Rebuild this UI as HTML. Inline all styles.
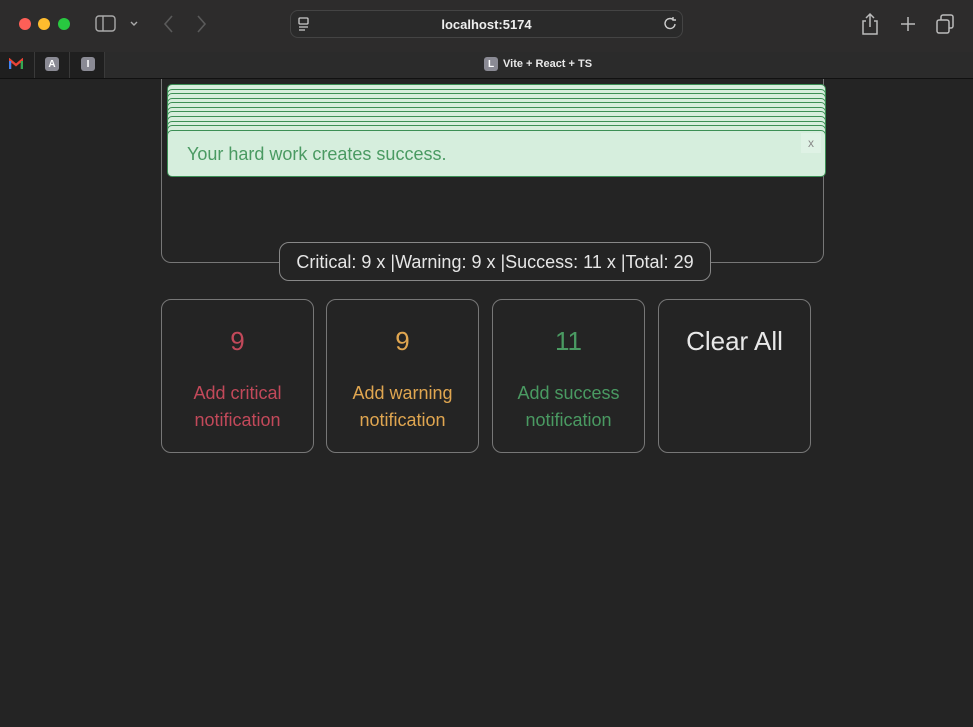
<!DOCTYPE html>
<html><head><meta charset="utf-8"><style>
*{box-sizing:border-box;margin:0;padding:0}
body{width:973px;height:727px;background:#242424;font-family:"Liberation Sans",sans-serif;position:relative;overflow:hidden}
.tb{position:absolute;left:0;top:0;width:973px;height:52px;background:#2d2c2c}
.tabs{position:absolute;left:0;top:52px;width:973px;height:27px;background:#2b2b2b;border-bottom:1px solid #111}
.pin{position:absolute;top:52px;height:26px;width:35px;background:#1f1f1f;border-right:1px solid #3a3a3a}
.dot{position:absolute;top:18px;width:12px;height:12px;border-radius:50%}
.url{position:absolute;left:290px;top:10px;width:393px;height:28px;border:1px solid #444;border-radius:8px;background:#2a2a2a;color:#eee;font-size:13px;font-weight:bold;text-align:center;line-height:27px}
.ico{position:absolute;width:14px;height:14px;border-radius:3px;background:#8a8a94;color:#fff;font-size:10px;font-weight:bold;text-align:center;line-height:15px}
.box{position:absolute;left:161px;top:79px;width:663px;height:184px;border:1px solid #777;border-top:none;border-radius:0 0 10px 10px}
.st{position:absolute;left:167px;width:659px;height:46px;background:#d6eedd;border:1px solid #3c8f55;border-radius:5px}
.cnt{position:absolute;left:279px;top:242px;width:432px;height:39px;border:1px solid #888;border-radius:10px;background:#242424;color:#e6e6e6;font-size:18px;text-align:center;line-height:38px}
.btn{position:absolute;top:299px;width:153px;height:154px;border:1px solid #777;border-radius:10px;text-align:center}
.n{font-size:26px;margin-top:26px;height:40px}
.l{font-size:18px;line-height:27px;margin-top:14px}
</style></head><body>
<div class="tb"></div>
<div class="dot" style="left:19px;background:#fe5f57"></div>
<div class="dot" style="left:38px;background:#febc2e"></div>
<div class="dot" style="left:58px;background:#28c840"></div>
<svg style="position:absolute;left:95px;top:15px" width="50" height="18" fill="none" stroke="#aaa" stroke-width="1.4"><rect x="1" y="1" width="19" height="15" rx="3"/><line x1="8" y1="1" x2="8" y2="16"/><path d="M36 7l3 3 3-3"/></svg>
<svg style="position:absolute;left:160px;top:14px" width="50" height="20" fill="none" stroke="#5a5a5a" stroke-width="1.6"><path d="M12 2l-7 8 7 8M38 2l7 8-7 8"/></svg>
<div class="url">localhost:5174</div>
<svg style="position:absolute;left:297px;top:17px" width="14" height="14" fill="none" stroke="#ccc" stroke-width="1.3"><rect x="2" y="1" width="9" height="6" rx="1"/><path d="M2 10h9M2 13h6"/></svg>
<svg style="position:absolute;left:663px;top:16px" width="15" height="15" fill="none" stroke="#ccc" stroke-width="1.4"><path d="M12 8a5 5 0 1 1-2-4.5M10 1v3h3"/></svg>
<svg style="position:absolute;left:860px;top:12px" width="100" height="24" fill="none" stroke="#bbb" stroke-width="1.5"><path d="M6 9H3v13h14V9h-3M10 15V2M6 6l4-4 4 4"/><path d="M48 5v14M41 12h14"/><rect x="77" y="8" width="12" height="13" rx="2"/><path d="M81 8V5a2 2 0 0 1 2-2h8a2 2 0 0 1 2 2v9a2 2 0 0 1-2 2h-2"/></svg>
<div class="tabs"></div>
<div class="pin" style="left:0"></div><div class="pin" style="left:35px"></div><div class="pin" style="left:70px"></div>
<svg style="position:absolute;left:9px;top:58px" width="14" height="12"><path d="M1 11V2l6 5 6-5v9" fill="none" stroke="#ea4335" stroke-width="2.4"/><path d="M1 11V3" stroke="#4285f4" stroke-width="2.4"/><path d="M13 11V3" stroke="#34a853" stroke-width="2.4"/></svg>
<div class="ico" style="left:45px;top:57px">A</div>
<div class="ico" style="left:81px;top:57px">I</div>
<div class="ico" style="left:484px;top:57px">L</div>
<div style="position:absolute;left:503px;top:57px;color:#e8e8e8;font-size:11px;font-weight:bold;line-height:15px">Vite + React + TS</div>
<div class="box"></div>
<div class="st" style="top:84px"></div><div class="st" style="top:88.5px"></div><div class="st" style="top:93px"></div><div class="st" style="top:97.5px"></div><div class="st" style="top:102px"></div><div class="st" style="top:106.5px"></div><div class="st" style="top:111px"></div><div class="st" style="top:116px"></div><div class="st" style="top:120.5px"></div><div class="st" style="top:125px"></div>
<div class="st" style="top:130px;height:47px"><div style="position:absolute;left:19px;top:13px;color:#4a9a62;font-size:18px">Your hard work creates success.</div><div style="position:absolute;right:4px;top:2px;width:20px;height:20px;background:#dff2e5;color:#888;font-size:12px;text-align:center;line-height:20px">x</div></div>
<div class="cnt">Critical: 9 x |Warning: 9 x |Success: 11 x |Total: 29</div>
<div class="btn" style="left:161px;color:#c2495a"><div class="n">9</div><div class="l">Add critical<br>notification</div></div>
<div class="btn" style="left:326px;color:#e0a650"><div class="n">9</div><div class="l">Add warning<br>notification</div></div>
<div class="btn" style="left:492px;color:#4a9a62"><div class="n">11</div><div class="l">Add success<br>notification</div></div>
<div class="btn" style="left:658px;color:#e8e8e8"><div class="n">Clear All</div></div>
</body></html>
